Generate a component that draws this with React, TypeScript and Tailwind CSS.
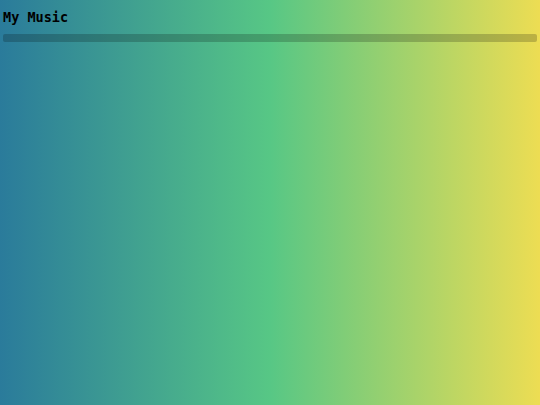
export default function App() {
  return (
    <div className="min-h-screen w-full bg-[linear-gradient(90deg,#2a7b9b_0%,#57c785_50%,#eddd53_100%)] px-[3px] pt-[8px]">
      <h1 className="font-['DejaVu_Sans_Mono',monospace] text-[13.5px] font-bold leading-[18px] text-black">
        My Music
      </h1>
      <div className="mt-[8px] h-[8px] w-full rounded-[2px] bg-black/20" />
    </div>
  );
}
